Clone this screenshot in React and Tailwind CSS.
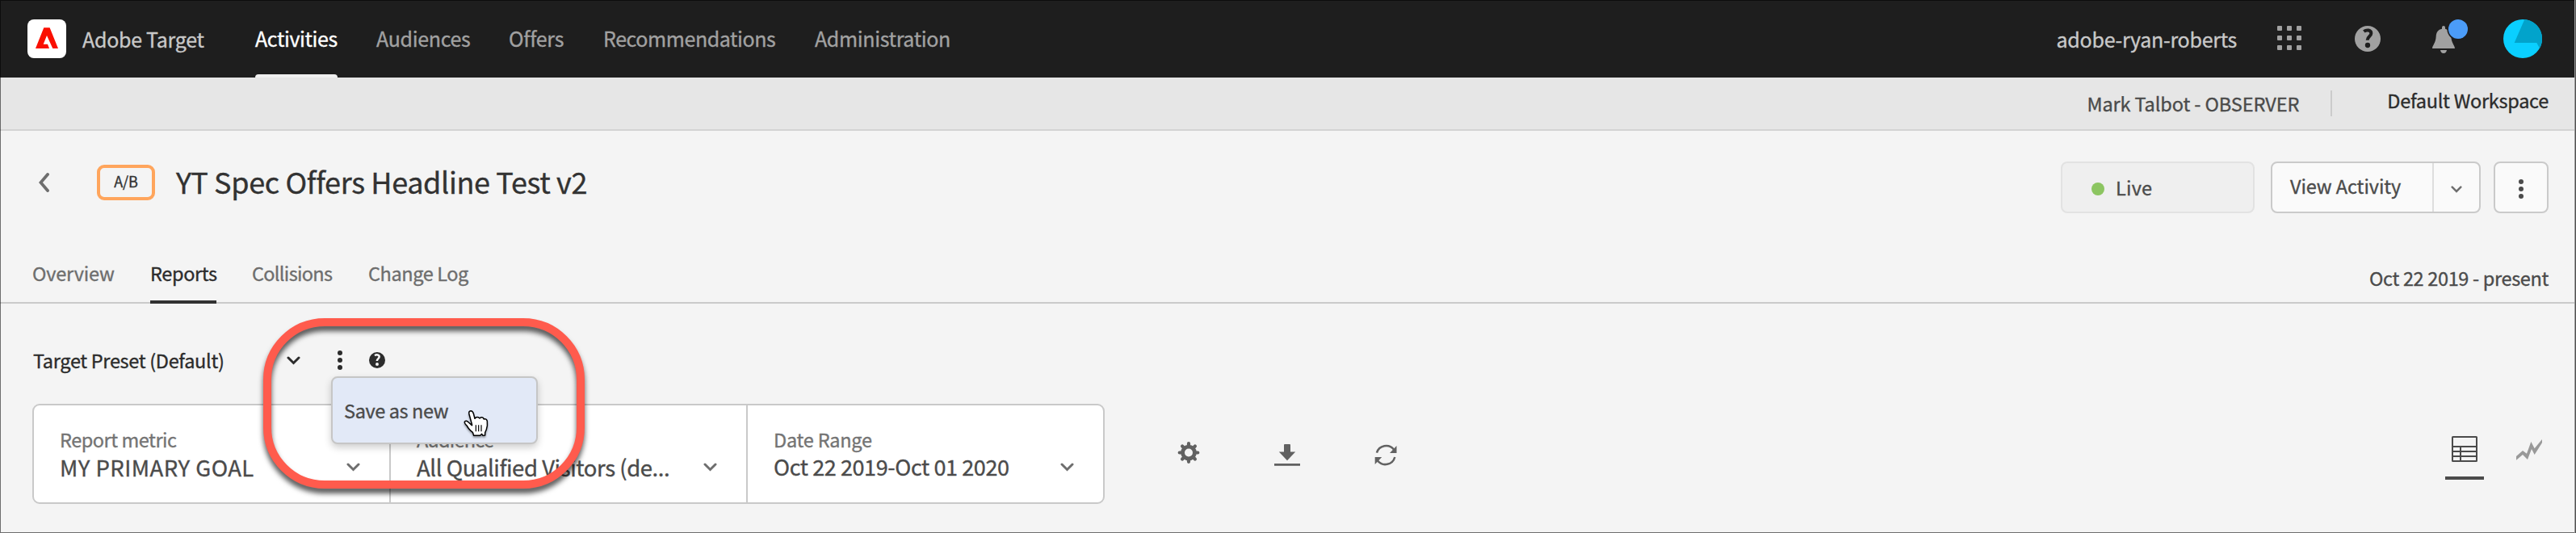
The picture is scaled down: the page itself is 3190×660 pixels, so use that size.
import React from "react";

const NAV = [
  { label: "Activities", cls: "w-[102px] tracking-[-0.4px] text-white", active: true },
  { label: "Audiences", cls: "w-[116px] tracking-[-0.34px] text-[#a1a1a1]" },
  { label: "Offers", cls: "w-[69px] tracking-[-0.26px] text-[#a1a1a1]" },
  { label: "Recommendations", cls: "w-[214px] tracking-[-0.43px] text-[#a1a1a1]" },
  { label: "Administration", cls: "w-[168px] tracking-[-0.35px] text-[#a1a1a1]" },
];

const TABS = [
  { label: "Overview", cls: "w-[102px] tracking-[-0.18px] text-[#6e6e6e] border-transparent" },
  { label: "Reports", cls: "w-[82px] tracking-[-0.37px] text-[#2c2c2c] border-[#323232]" },
  { label: "Collisions", cls: "w-[100px] tracking-[-0.68px] text-[#6e6e6e] border-transparent" },
  { label: "Change Log", cls: "w-[124px] tracking-[-0.41px] text-[#6e6e6e] border-transparent" },
];

const FILTERS = [
  { label: "Report metric", value: "MY PRIMARY GOAL", labelCls: "tracking-[-0.47px]", valueCls: "text-[27.5px] tracking-[0.45px]", cell: "w-[442px] border-r-2" },
  { label: "Audience", value: "All Qualified Visitors (de...", labelCls: "tracking-[-0.74px]", valueCls: "text-[27.5px] tracking-[-0.44px]", cell: "w-[442px] border-r-2" },
  { label: "Date Range", value: "Oct 22 2019-Oct 01 2020", labelCls: "tracking-[-0.24px]", valueCls: "text-[27px] tracking-[-0.4px]", cell: "w-[440px]" },
];

function Chevron({ className }) {
  return (
    <svg viewBox="0 0 17 11" className={className} fill="none" stroke="currentColor" strokeWidth="3" strokeLinecap="round" strokeLinejoin="miter">
      <path d="M2 2 L8.5 8.5 L15 2" />
    </svg>
  );
}

function Dots({ className }) {
  return (
    <svg viewBox="0 0 6 24" className={className} fill="currentColor">
      <circle cx="3" cy="3" r="3" />
      <circle cx="3" cy="12" r="3" />
      <circle cx="3" cy="21" r="3" />
    </svg>
  );
}

function Help({ className, mark }) {
  return (
    <svg viewBox="48 66 96 96" className={className}>
      <circle cx="96" cy="114" r="48" fill="currentColor" />
      <path d="M82 87 C92 79 109 81 109 94 C109 105 95 105 95 119" fill="none" stroke={mark} strokeWidth="12" />
      <circle cx="96" cy="138" r="9.5" fill={mark} />
    </svg>
  );
}

function AdobeLogo() {
  return (
    <div className="h-12 w-12 rounded-lg bg-white">
      <svg viewBox="34 24 48 48" className="h-12 w-12">
        <path d="M54.3 34.2H61.6L72 60H65.3L58 44L53.7 54.7H59L61 60H44Z" fill="#fa0f00" />
      </svg>
    </div>
  );
}

function AppSwitcher() {
  return (
    <svg viewBox="0 0 30 30" className="h-[30px] w-[30px]" fill="#a1a1a1">
      {[0, 12, 24].map((y) => [0, 12, 24].map((x) => <rect key={`${x}-${y}`} x={x} y={y} width="6" height="6" rx="1" />))}
    </svg>
  );
}

function Bell() {
  return (
    <svg viewBox="336 42 132 132" className="mb-1 h-11 w-11">
      <path d="M372 77V72Q372 66 378 66Q384 66 384 72V77C396 80 405 90 406 106C407 130 420 140 420 150H336C336 140 349 130 350 106C351 88 358 80 372 77Z" fill="#a1a1a1" />
      <path d="M366 156H390Q388 168 378 168Q368 168 366 156Z" fill="#a1a1a1" />
      <circle cx="432" cy="78" r="41" fill="#1e1e1e" />
      <circle cx="432" cy="78" r="36" fill="#4b9cf8" />
    </svg>
  );
}

function Avatar() {
  return (
    <svg viewBox="600 42 144 144" className="h-12 w-12">
      <circle cx="672" cy="114" r="72" fill="#0acfff" />
      <path d="M679 42L641 129H724L735 149A72 72 0 0 0 679 42Z" fill="#02a3cb" />
    </svg>
  );
}

function Gear() {
  return (
    <svg viewBox="0 0 32 32" className="h-8 w-8" fill="none" stroke="#616161">
      <circle cx="16" cy="14.5" r="7.4" strokeWidth="4.8" />
      <g strokeWidth="4.2" strokeLinecap="round">
        <path d="M16 3.2V6M16 23V25.8M4.7 14.5H7.5M24.5 14.5H27.3M8.1 6.6L10 8.5M22 20.5L23.9 22.4M8.1 22.4L10 20.5M22 8.5L23.9 6.6" />
      </g>
    </svg>
  );
}

function Download() {
  return (
    <svg viewBox="0 0 32 32" className="h-8 w-8" fill="#616161">
      <path d="M13 4H19Q20 4 20 5V13.4H26.2L16 24.2L5.8 13.4H12V5Q12 4 13 4Z" />
      <rect x="0" y="28" width="32" height="2.8" />
    </svg>
  );
}

function Refresh() {
  return (
    <svg viewBox="0 0 32 32" className="h-8 w-8" fill="none" stroke="#616161" strokeWidth="2.5">
      <path d="M4.9 14.6A12.2 12.2 0 0 1 26 10.5" />
      <path d="M27.3 20A12.2 12.2 0 0 1 6 24.5" />
      <path d="M29.5 6V15H21Z" fill="#616161" stroke="none" />
      <path d="M2.7 29V20H11.2Z" fill="#616161" stroke="none" />
    </svg>
  );
}

function TableIcon() {
  return (
    <svg viewBox="0 0 32 32" className="h-8 w-8" fill="none" stroke="#4b4b4b" strokeWidth="2">
      <rect x="1" y="1" width="30" height="30" rx="0.5" />
      <path d="M1 13H31M1 19H31M1 25H31M11 13V31" />
    </svg>
  );
}

function TrendIcon() {
  return (
    <svg viewBox="798 732 96 78" className="mt-1 h-[26px] w-8" fill="#999999">
      <path d="M798 795L822 774L837 785L853 741L866 766L894 732V745L866 789L855 768L840 807L822 789L798 809Z" />
    </svg>
  );
}

function HandCursor() {
  return (
    <svg viewBox="39 36 99 108" className="h-9 w-[33px] drop-shadow-[0_2px_1px_rgba(0,0,0,0.35)]">
      <path
        d="M74 94L63 54Q60 42 69 41Q76 41 79 51L84 70Q88 62 97 65L102 69Q108 63 115 67L118 72Q127 69 130 79Q132 95 127 110L122 122V132L114 133L110 127L104 133H80L76 121Q60 108 55 97Q45 88 46 82Q52 75 61 84L73 95Z"
        fill="#fff"
        stroke="#000"
        strokeWidth="4.5"
        strokeLinejoin="round"
      />
      <path d="M88 94V118M98 94V118M108 94V118" stroke="#000" strokeWidth="3.6" />
    </svg>
  );
}

export default function App() {
  return (
    <div className="relative flex h-[660px] w-[3190px] flex-col overflow-hidden whitespace-nowrap bg-[#f4f4f4] font-['Noto_Sans_CJK_JP','Open_Sans',sans-serif] text-[23.5px] leading-8 text-[#4b4b4b] [-webkit-text-stroke:0.35px_currentColor]">
      <header className="flex h-24 shrink-0 items-center justify-between bg-[#1e1e1e] pl-[34px] pr-[42px] text-[25px]">
        <div className="flex h-full items-center">
          <AdobeLogo />
          <span className="ml-5 w-[214px] pb-px tracking-[-0.28px] text-[#c8c8c8]">Adobe Target</span>
          <nav className="flex h-full gap-12">
            {NAV.map((n) => (
              <a key={n.label} className={`flex h-full flex-col justify-between ${n.cls}`}>
                <span className="pt-[31px]">{n.label}</span>
                {n.active && <span className="h-1 rounded-t-sm bg-[#efefef]" />}
              </a>
            ))}
          </nav>
        </div>
        <div className="flex items-center">
          <span className="mr-[50px] pb-px tracking-[-0.27px] text-[#c8c8c8]">adobe-ryan-roberts</span>
          <div className="mb-0.5 mr-[66px]">
            <AppSwitcher />
          </div>
          <Help className="mr-16 h-8 w-8 text-[#a1a1a1]" mark="#1e1e1e" />
          <div className="mr-11">
            <Bell />
          </div>
          <Avatar />
        </div>
      </header>

      <div className="flex h-[66px] shrink-0 items-start justify-end border-b-2 border-[#d3d3d3] bg-[#e6e6e6] pr-[34px]">
        <span className="mt-4 tracking-[-0.11px]">Mark Talbot - OBSERVER</span>
        <span className="ml-[39px] mt-4 h-8 w-0.5 bg-[#cbcbcb]" />
        <span className="ml-[68px] mt-3 tracking-[-0.28px] text-[#2c2c2c]">Default Workspace</span>
      </div>

      <div className="flex h-32 shrink-0 items-start justify-between pl-12 pr-[34px] pt-[38px]">
        <div className="flex items-start">
          <svg viewBox="0 0 13 24" className="mt-[14px] h-6 w-[13px]" fill="none" stroke="#6e6e6e" strokeWidth="3.8" strokeLinecap="round">
            <path d="M11 2L2.4 12L11 22" />
          </svg>
          <span className="ml-[59px] mt-1 flex h-11 w-[72px] items-center justify-center rounded-[9px] border-4 border-[#ffa55c] pb-1 text-[18px] tracking-[-0.17px] text-[#323232]">
            A/B
          </span>
          <h1 className="ml-[26px] text-[36px] leading-[48px] tracking-[-0.36px] text-[#323232]">YT Spec Offers Headline Test v2</h1>
        </div>
        <div className="flex">
          <div className="flex h-16 w-[240px] items-center rounded-lg border-2 border-[#e2e2e2] bg-[#efefef] pl-9">
            <span className="mt-1 h-4 w-4 rounded-full bg-[#8cc561]" />
            <span className="ml-[14px] tracking-[0.21px]">Live</span>
          </div>
          <div className="ml-5 flex h-16 w-[260px] rounded-lg border-2 border-[#cacaca] bg-[#fafafa]">
            <span className="w-[200px] border-r-2 border-[#dedede] pl-[22px] pt-3 tracking-[-0.09px]">View Activity</span>
            <span className="flex flex-1 items-center justify-center pt-1">
              <Chevron className="h-[9px] w-[14px] text-[#6e6e6e]" />
            </span>
          </div>
          <div className="ml-4 flex h-16 w-[68px] items-center justify-center rounded-lg border-2 border-[#cacaca] bg-[#fafafa] pt-1">
            <Dots className="h-6 w-1.5 text-[#4b4b4b]" />
          </div>
        </div>
      </div>

      <div className="flex h-[86px] shrink-0 items-end justify-between border-b-2 border-[#cacaca] pl-10 pr-[34px]">
        <div className="-mb-0.5 flex gap-11">
          {TABS.map((t) => (
            <a key={t.label} className={`border-b-4 pb-[18px] ${t.cls}`}>
              {t.label}
            </a>
          ))}
        </div>
        <span className="mb-[14px] tracking-[-0.34px]">Oct 22 2019 - present</span>
      </div>

      <div className="flex h-[124px] shrink-0 items-start pl-[41px] pt-[54px] text-[#2c2c2c]">
        <span className="w-[314px] tracking-[-0.32px]">Target Preset (Default)</span>
        <div className="flex h-8 items-center">
          <Chevron className="h-[11px] w-[17px]" />
          <Dots className="ml-[46px] h-6 w-1.5" />
          <Help className="ml-[33px] h-5 w-5" mark="#f4f4f4" />
        </div>
      </div>

      <div className="flex h-[124px] shrink-0 items-start pl-10 pr-[42px]">
        <div className="flex h-[124px] w-[1328px] rounded-[9px] border-2 border-[#c9c9c9] bg-white">
          {FILTERS.map((f) => (
            <div key={f.label} className={`border-[#c9c9c9] pl-8 pr-9 pt-7 ${f.cell}`}>
              <div className={`leading-7 text-[#747474] ${f.labelCls}`}>{f.label}</div>
              <div className="mt-0.5 flex items-center justify-between leading-9">
                <span className={f.valueCls}>{f.value}</span>
                <Chevron className="h-[11px] w-[17px] text-[#6e6e6e]" />
              </div>
            </div>
          ))}
        </div>
        <div className="ml-[88px] mt-[46px] flex gap-[90px]">
          <Gear />
          <Download />
          <Refresh />
        </div>
        <div className="ml-auto mt-10 flex items-start gap-10">
          <div className="flex w-12 flex-col items-center border-b-4 border-[#4b4b4b] pb-[18px]">
            <TableIcon />
          </div>
          <TrendIcon />
        </div>
      </div>

      {/* Preset menu */}
      <div className="absolute left-[410px] top-[466px] flex h-[84px] w-[256px] items-center rounded-lg border-2 border-[#c6c6c6] bg-[#e2e9f7] pl-[14px] tracking-[-0.38px] shadow-[0_4px_10px_rgba(0,0,0,0.2)]">
        Save as new
      </div>
      <div className="absolute left-[573px] top-[507px]">
        <HandCursor />
      </div>

      {/* Callout */}
      <div className="absolute left-[326px] top-[394px] h-[211px] w-[398px] rounded-[76px] border-[10px] border-[#ff5b4d] drop-shadow-[0_6px_3px_rgba(0,0,0,0.65)]" />

      {/* Frame */}
      <div className="pointer-events-none absolute inset-0 border-y border-l border-black/55" />
      <div className="pointer-events-none absolute right-0 top-0 h-full w-0.5 border-r border-[#505050] bg-[#999999]" />
    </div>
  );
}
